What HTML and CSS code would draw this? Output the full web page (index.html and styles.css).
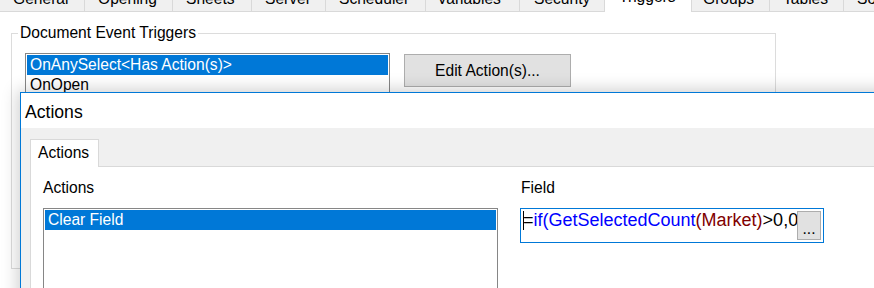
FILE: index.html
```html
<!DOCTYPE html>
<html>
<head>
<meta charset="utf-8">
<link rel="stylesheet" href="styles.css">
</head>
<body>
<div class="window">
  <div class="tabstrip">
    <div class="tab t1"><span>General</span></div>
    <div class="tab t2"><span>Opening</span></div>
    <div class="tab t3"><span>Sheets</span></div>
    <div class="tab t4"><span>Server</span></div>
    <div class="tab t5"><span>Scheduler</span></div>
    <div class="tab t6"><span>Variables</span></div>
    <div class="tab t7"><span>Security</span></div>
    <div class="tab active t8"><span>Triggers</span></div>
    <div class="tab t9"><span>Groups</span></div>
    <div class="tab t10"><span>Tables</span></div>
    <div class="tab t11"><span>Sort</span></div>
  </div>
  <fieldset class="group">
    <legend>Document Event Triggers</legend>
    <div class="group-row">
      <div class="listbox trig-list">
        <div class="item sel">OnAnySelect&lt;Has Action(s)&gt;</div>
        <div class="item">OnOpen</div>
        <div class="item">OnPostReduceData</div>
        <div class="item">OnPostReload</div>
        <div class="item">OnPostSave</div>
      </div>
      <button class="btn edit-btn">Edit Action(s)...</button>
    </div>
  </fieldset>
  <div class="dialog">
    <div class="dlg-title">Actions</div>
    <div class="dlg-body">
      <div class="dlg-tabs"><div class="dtab">Actions</div></div>
      <div class="panel">
        <div class="col col-actions">
          <div class="lbl">Actions</div>
          <div class="listbox act-list">
            <div class="item sel">Clear Field</div>
          </div>
        </div>
        <div class="col col-field">
          <div class="lbl lbl-field">Field</div>
          <div class="field">
            <span class="expr"><span class="caret"></span>=<span class="fn">if(GetSelectedCount</span><span class="fld">(Market)</span>&gt;0,0,1)</span>
            <button class="btn dots">...</button>
          </div>
        </div>
      </div>
    </div>
  </div>
</div>
</body>
</html>
```

FILE: styles.css
```css
html, body {
  margin: 0;
  padding: 0;
  background: #ffffff;
}
body {
  width: 874px;
  height: 288px;
  overflow: hidden;
  font-family: "Liberation Sans", Arial, sans-serif;
  font-size: 15.6px;
  color: #000000;
}
.window {
  position: relative;
  width: 874px;
  height: 288px;
  overflow: hidden;
  background: #ffffff;
}

/* top tab strip */
.tabstrip {
  display: flex;
  align-items: flex-start;
  height: 12px;
  overflow: hidden;
}
.tab {
  box-sizing: border-box;
  flex: none;
  height: 12px;
  overflow: hidden;
  padding-left: 13px;
  background: #f0f0f0;
  border-right: 1px solid #d9d9d9;
  border-bottom: 1px solid #d9d9d9;
  white-space: nowrap;
}
.tab span {
  display: block;
  line-height: 15px;
  margin-top: -9px;
}
.t1 { width: 85px; }
.t2 { width: 88px; }
.t3 { width: 79px; }
.t4 { width: 74px; }
.t5 { width: 100px; }
.t6 { width: 94px; padding-left: 11px; }
.t7 { width: 84px; border-right: none; padding-left: 14px; }
.t8 { width: 88px; }
.t9 { width: 78px; padding-left: 11px; }
.t10 { width: 74px; }
.t11 { flex: 1; border-right: none; }
.tab.active {
  background: #ffffff;
  border-left: 1px solid #d9d9d9;
  border-bottom: none;
  padding-left: 14px;
}
.tab.active span {
  margin-top: -11px;
}

/* group box */
.group {
  box-sizing: border-box;
  width: 765px;
  margin: 12px 0 0 11px;
  padding: 0;
  border: 1px solid #dcdcdc;
  min-inline-size: 0;
}
.group legend {
  margin-left: 6px;
  padding: 0 2px;
  line-height: 18px;
  font-size: 15.6px;
}
.group-row {
  display: flex;
  align-items: flex-start;
  height: 215px;
  margin-top: 11px;
  padding-left: 13px;
}

.listbox {
  box-sizing: border-box;
  border: 1px solid #868686;
  background: #ffffff;
  padding: 1px;
  overflow: hidden;
}
.item {
  height: 20px;
  line-height: 20px;
  padding-left: 3px;
  white-space: nowrap;
}
.item.sel {
  background: #0078d7;
  color: #ffffff;
}
.trig-list {
  width: 365px;
  height: 130px;
}

.btn {
  box-sizing: border-box;
  font-family: "Liberation Sans", Arial, sans-serif;
  font-size: 15.6px;
  color: #000000;
  background: #e1e1e1;
  border: 1px solid #adadad;
  padding: 0;
  margin: 0;
}
.edit-btn {
  width: 167px;
  height: 33px;
  margin: 1px 0 0 14px;
  line-height: 31px;
}

/* dialog window overlay */
.dialog {
  position: absolute;
  left: 20px;
  top: 92px;
  width: 900px;
  height: 230px;
  box-sizing: border-box;
  border: 1px solid #0078d7;
  background: #f0f0f0;
  box-shadow: 0 0 16px 2px rgba(0, 0, 0, 0.2);
  z-index: 2;
}
.dlg-title {
  height: 32px;
  padding: 3px 0 0 4px;
  line-height: 32px;
  font-size: 17.6px;
  background: #ffffff;
}
.dlg-body {
  padding: 11px 0 0 9px;
}
.dlg-tabs {
  display: flex;
}
.dtab {
  box-sizing: border-box;
  width: 69px;
  height: 28px;
  padding-left: 7px;
  line-height: 26px;
  background: #ffffff;
  border: 1px solid #d9d9d9;
  border-bottom: none;
  margin-bottom: -1px;
  position: relative;
  z-index: 1;
}
.panel {
  display: flex;
  gap: 22px;
  height: 200px;
  padding: 12px 0 0 12px;
  background: #ffffff;
  border-top: 1px solid #d9d9d9;
  border-left: 1px solid #d9d9d9;
}
.lbl {
  line-height: 18px;
  height: 18px;
  margin-bottom: 11px;
}
.lbl-field {
  padding-left: 1px;
}
.col-actions {
  width: 455px;
}
.act-list {
  width: 455px;
  height: 120px;
}
.col-field {
  width: 304px;
}
.field {
  box-sizing: border-box;
  display: flex;
  align-items: flex-start;
  width: 304px;
  height: 35px;
  border: 1px solid #0078d7;
  background: #ffffff;
}
.expr {
  flex: 1;
  min-width: 0;
  overflow: hidden;
  white-space: nowrap;
  padding: 1px 0 0 2px;
  font-size: 18px;
  line-height: 20px;
  color: #000000;
}
.caret {
  display: inline-block;
  width: 1px;
  height: 19px;
  background: #000000;
  vertical-align: -4px;
  margin-right: -1px;
}
.fn {
  color: #0000ff;
}
.fld {
  color: #800000;
}
.dots {
  flex: none;
  width: 24px;
  height: 29px;
  margin: 2px 2px 0 0;
  padding-top: 7px;
  line-height: 18px;
  text-align: center;
}
```
